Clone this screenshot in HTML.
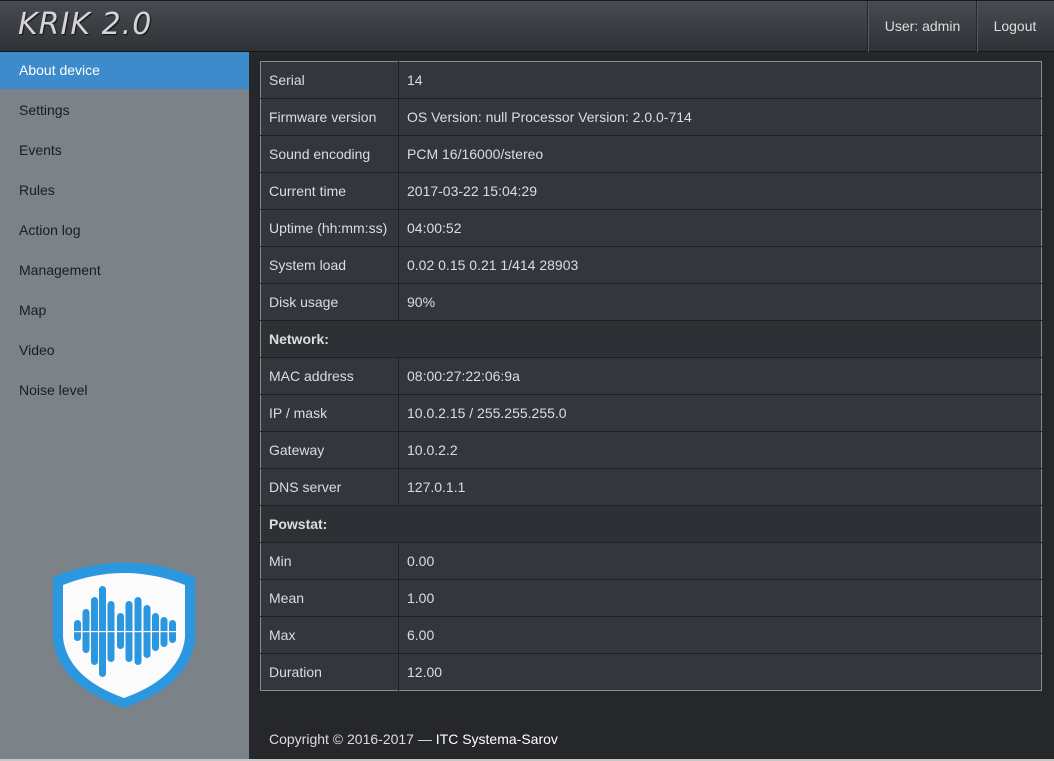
<!DOCTYPE html>
<html><head><meta charset="utf-8"><style>
*{margin:0;padding:0;box-sizing:border-box}
body{width:1054px;height:761px;overflow:hidden;background:#25272b;font-family:"Liberation Sans",sans-serif;font-size:14px;position:relative}
#hdr{position:absolute;left:0;top:0;width:1054px;height:52px;background:linear-gradient(#484b52,#2f3136);border-top:1px solid #1a1b1d;border-bottom:1px solid #151618}
#logo{position:absolute;left:18px;top:6px;font-family:"DejaVu Sans",sans-serif;font-size:30px;font-style:italic;color:#d4d4d4;letter-spacing:1px;text-shadow:1px 1px 1px #111}
.hb{position:absolute;top:0;height:51px;border-left:1px solid #25272b;box-shadow:inset 1px 0 0 #55585e;color:#ddd;font-size:14px;line-height:51px;text-align:center}
#side{position:absolute;left:0;top:52px;width:249px;height:707px;background:#7b8288}
.nav{height:40px;line-height:37px;padding-left:19px;color:#1b1c1e;font-size:14px}
.nav.act{background:linear-gradient(#3e8bcc 0,#3e8bcc 37px,transparent 37px);color:#fff}
#tbl{position:absolute;left:260px;top:61px;width:782px;border:1px solid #8a8a8a;border-collapse:collapse}
#tbl td{height:37px;border-top:1px solid #1f2125;color:#ddd;font-size:14px;background:#33363d;padding-left:8px}
#tbl td.l{width:138px;border-right:1px solid #1f2125}
#tbl tr:first-child td{border-top:none}
#tbl td.s{background:#2d3035;font-weight:bold}
#foot{position:absolute;left:269px;top:731px;color:#ddd;font-size:14px}
#foot b{color:#fff;font-weight:normal}
#bl{position:absolute;left:0;top:759px;width:1054px;height:2px;background:#c8c8c8}
</style></head><body>
<div id="hdr"><div id="logo">KRIK 2.0</div>
<div class="hb" style="left:867px;width:110px">User: admin</div>
<div class="hb" style="left:976px;width:77px">Logout</div></div>
<div id="side">
<div class="nav act">About device</div>
<div class="nav">Settings</div><div class="nav">Events</div><div class="nav">Rules</div><div class="nav">Action log</div><div class="nav">Management</div><div class="nav">Map</div><div class="nav">Video</div><div class="nav">Noise level</div>
<svg style="position:absolute;left:0;top:0" width="249" height="707" viewBox="0 52 249 707">
<path d="M53,577 Q124,548 195,577 L195,640 Q190,685 124,708 Q58,685 53,640 Z" fill="#2b97df"/>
<path d="M63,585 Q124,561 185,585 L185,638 Q180,678 124,698 Q68,678 63,638 Z" fill="#fbfbfb"/>
<g fill="#2b97df">
<rect x="74" y="620" width="7" height="21" rx="3.5"/>
<rect x="82.5" y="609" width="7" height="44" rx="3.5"/>
<rect x="91" y="597" width="7" height="68" rx="3.5"/>
<rect x="99" y="586" width="7" height="91" rx="3.5"/>
<rect x="107.5" y="601" width="7" height="61" rx="3.5"/>
<rect x="117" y="613" width="7" height="36" rx="3.5"/>
<rect x="125.5" y="601" width="7" height="61" rx="3.5"/>
<rect x="134.5" y="597" width="7" height="68" rx="3.5"/>
<rect x="143.5" y="605" width="7" height="53" rx="3.5"/>
<rect x="152" y="613" width="7" height="38" rx="3.5"/>
<rect x="160.5" y="617" width="7" height="30" rx="3.5"/>
<rect x="169" y="620" width="7" height="23" rx="3.5"/>
</g>
<rect x="72" y="631" width="106" height="1.2" fill="#fbfbfb"/>
</svg>
</div>
<table id="tbl">
<tr><td class="l">Serial</td><td>14</td></tr>
<tr><td class="l">Firmware version</td><td>OS Version: null Processor Version: 2.0.0-714</td></tr>
<tr><td class="l">Sound encoding</td><td>PCM 16/16000/stereo</td></tr>
<tr><td class="l">Current time</td><td>2017-03-22 15:04:29</td></tr>
<tr><td class="l">Uptime (hh:mm:ss)</td><td>04:00:52</td></tr>
<tr><td class="l">System load</td><td>0.02 0.15 0.21 1/414 28903</td></tr>
<tr><td class="l">Disk usage</td><td>90%</td></tr>
<tr><td class="s" colspan="2">Network:</td></tr>
<tr><td class="l">MAC address</td><td>08:00:27:22:06:9a</td></tr>
<tr><td class="l">IP / mask</td><td>10.0.2.15 / 255.255.255.0</td></tr>
<tr><td class="l">Gateway</td><td>10.0.2.2</td></tr>
<tr><td class="l">DNS server</td><td>127.0.1.1</td></tr>
<tr><td class="s" colspan="2">Powstat:</td></tr>
<tr><td class="l">Min</td><td>0.00</td></tr>
<tr><td class="l">Mean</td><td>1.00</td></tr>
<tr><td class="l">Max</td><td>6.00</td></tr>
<tr><td class="l">Duration</td><td>12.00</td></tr>
</table>
<div id="foot">Copyright © 2016-2017 — <b>ITC Systema-Sarov</b></div>
<div id="bl"></div>
</body></html>
